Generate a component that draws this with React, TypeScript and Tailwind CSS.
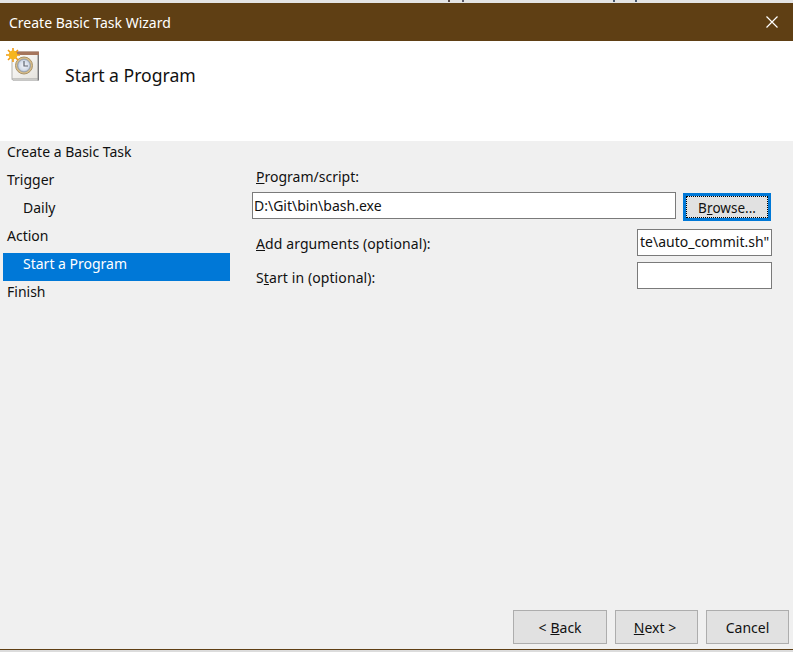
function ClockIcon() {
  return (
    <svg width="34" height="36" viewBox="0 0 34 36" className="block">
      <defs>
        <linearGradient id="page" x1="0" y1="0" x2="1" y2="1">
          <stop offset="0" stopColor="#ffffff" />
          <stop offset="1" stopColor="#e4e2dc" />
        </linearGradient>
        <radialGradient id="face" cx="0.5" cy="0.5" r="0.5">
          <stop offset="0" stopColor="#f4f6fa" />
          <stop offset="0.75" stopColor="#d3dbe8" />
          <stop offset="1" stopColor="#9aa6b8" />
        </radialGradient>
      </defs>
      <rect x="7" y="4" width="26" height="27" fill="url(#page)" stroke="#b4b4b0" />
      <rect x="8" y="3.5" width="26" height="3.5" fill="#a5755c" />
      <path d="M7 31h26v1.5H8z" fill="#d8d8d4" stroke="#a0a0a0" strokeWidth="0.5" />
      <path d="M33.5 7v25.5" stroke="#77777a" strokeWidth="1.5" />
      <circle cx="19" cy="17.5" r="8.5" fill="#dcbf86" stroke="#a8926a" strokeWidth="1" />
      <circle cx="19" cy="17.5" r="6.5" fill="url(#face)" stroke="#8d98a8" strokeWidth="0.7" />
      <path d="M19 13V18H23" fill="none" stroke="#5e6470" strokeWidth="1.2" />
      <g stroke="#f09a12" strokeWidth="1.6">
        <path d="M8 0v14M1 7h14M3 2l10 10M13 2 3 12" />
      </g>
      <circle cx="8" cy="7" r="4.4" fill="#f6b61e" />
    </svg>
  );
}

function Row({ children, active, indent }: { children: string; active?: boolean; indent?: boolean }) {
  return (
    <div
      className={
        "ml-[3px] h-7 pt-px " +
        (indent ? "pl-5 " : "pl-1 ") +
        (active ? "bg-[#0078d7] text-white" : "text-[#111111]")
      }
    >
      {children}
    </div>
  );
}

function WinButton({ children, className }: { children: React.ReactNode; className?: string }) {
  return (
    <button className={"flex h-[34px] items-center justify-center border border-[#adadad] bg-[#e1e1e1] pt-[2px] text-[#111111] " + (className ?? "")}>
      {children}
    </button>
  );
}

export default function App() {
  return (
    <div className="flex h-[652px] w-[793px] flex-col overflow-hidden bg-[#dcdcdc] font-['Noto_Sans','Open_Sans',sans-serif] text-[14px] leading-5">
      <div className="relative h-[3px] shrink-0 bg-[#e4e4e4]">
        <span className="absolute left-[448px] top-0 h-[2px] w-[2px] bg-[#5a4a48]" />
        <span className="absolute left-[462px] top-0 h-[2px] w-[2px] bg-[#5a5a6a]" />
        <span className="absolute left-[613px] top-0 h-[2px] w-[2px] bg-[#4a5a70]" />
        <span className="absolute left-[635px] top-0 h-[2px] w-[2px] bg-[#4a5a70]" />
      </div>

      <div className="flex h-[38px] shrink-0 items-center justify-between bg-[#5f3f14] pl-[9px] pr-[14px] pt-[1px] text-white">
        <span>Create Basic Task Wizard</span>
        <svg width="14" height="14" viewBox="0 0 14 14" className="mb-[1px]">
          <path d="M1.5 1.5l11 11M12.5 1.5l-11 11" stroke="#ffffff" strokeWidth="1.2" fill="none" />
        </svg>
      </div>

      <div className="flex h-[100px] shrink-0 items-start bg-white pl-[5px] pt-[7px]">
        <ClockIcon />
        <span className="ml-[26px] mt-[15px] text-[17.6px] leading-6 text-[#111111]">Start a Program</span>
      </div>

      <div className="flex h-[509px] shrink-0 flex-col border-b border-[#5f3f14] bg-[#f0f0f0]">
        <div className="flex flex-1">
          <div className="w-[230px] shrink-0">
            <Row>Create a Basic Task</Row>
            <Row>Trigger</Row>
            <Row indent>Daily</Row>
            <Row>Action</Row>
            <Row active indent>Start a Program</Row>
            <Row>Finish</Row>
          </div>

          <div className="flex-1 pl-[22px] pr-[21px] pt-[26px] text-[#111111]">
            <div className="h-[20px] pl-[4px]"><u>P</u>rogram/script:</div>
            <div className="mt-[5px] flex items-start">
              <div className="flex h-[27px] w-[424px] items-center border border-[#7a7a7a] bg-white pl-[1px] pt-[1px]">{"D:\\Git\\bin\\bash.exe"}</div>
              <button className="relative ml-[7px] mt-[1px] flex h-[28px] w-[88px] items-center justify-center border-[3px] border-[#0078d7] bg-[#e1e1e1] pt-[2px] text-[13.5px] text-[#111111]">
                <span className="absolute inset-0 border border-dotted border-black" />
                B<u>r</u>owse...
              </button>
            </div>
            <div className="mt-[8px] flex h-[27px] items-center justify-between">
              <span className="pl-[4px] pt-[3px] tracking-[0.1px]"><u>A</u>dd arguments (optional):</span>
              <div className="flex h-[27px] w-[135px] items-center overflow-hidden whitespace-nowrap border border-[#7a7a7a] bg-white pb-[1px] pl-[2px]">{'te\\auto_commit.sh"'}</div>
            </div>
            <div className="mt-[6px] flex h-[27px] items-center justify-between">
              <span className="pl-[4px] pt-[5px] tracking-[0.1px]">S<u>t</u>art in (optional):</span>
              <div className="h-[27px] w-[135px] border border-[#7a7a7a] bg-white" />
            </div>
          </div>
        </div>

        <div className="flex justify-end gap-2 pb-[5px] pr-[4px]">
          <WinButton className="w-[94px]">{"< "}<u className="ml-1">B</u>ack</WinButton>
          <WinButton className="w-[83px] pr-[3px]"><u>N</u>ext {" >"}</WinButton>
          <WinButton className="w-[83px]">Cancel</WinButton>
        </div>
      </div>
    </div>
  );
}
